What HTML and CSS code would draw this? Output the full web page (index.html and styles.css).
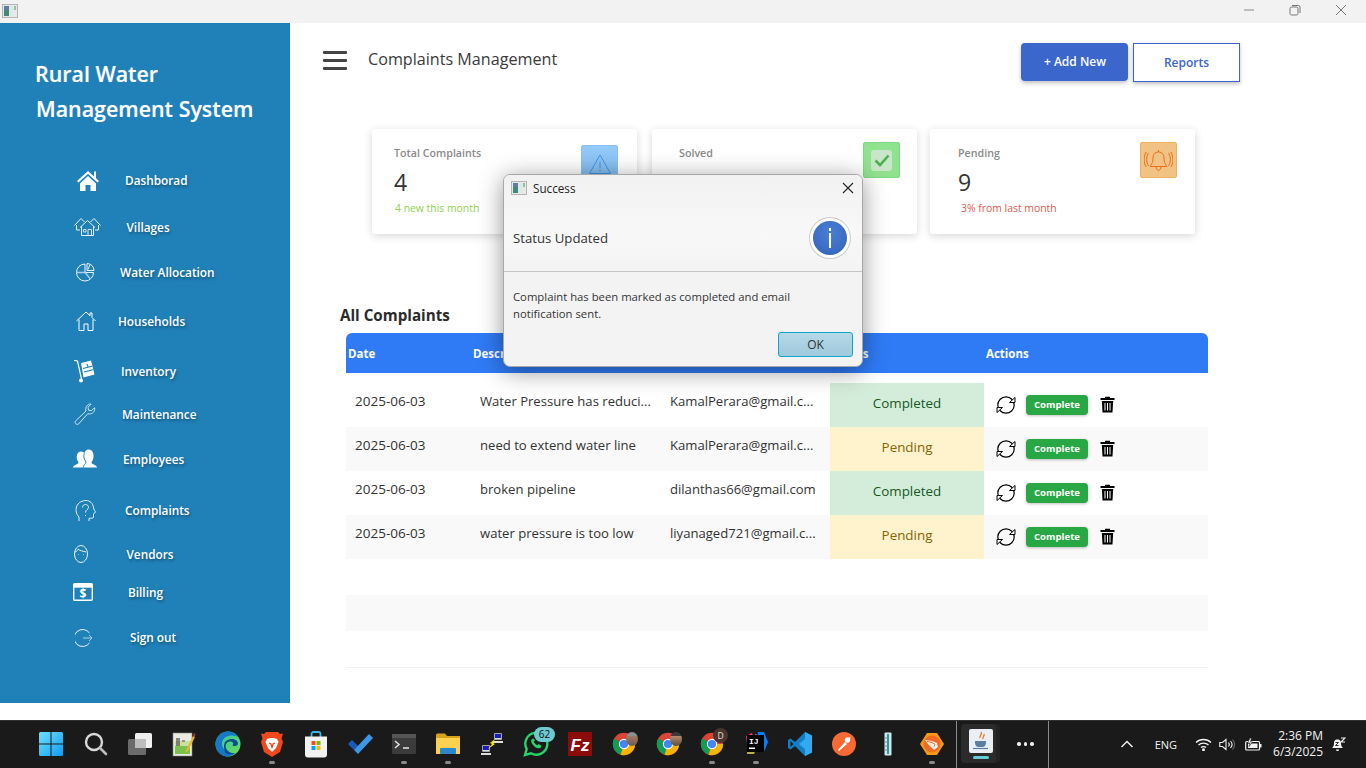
FILE: index.html
```html
<!DOCTYPE html>
<html lang="en">
<head>
<meta charset="utf-8">
<title>Complaints Management</title>
<link rel="stylesheet" href="styles.css">
</head>
<body>
<svg class="defs" width="0" height="0">
  <defs>
    <symbol id="appicon" viewBox="0 0 16 14">
      <rect x=".5" y=".5" width="15" height="13" fill="#e8e8e8" stroke="#b5b5b5"/>
      <rect x="2" y="2" width="5" height="10" fill="#3f8a7a"/>
      <rect x="2" y="2" width="5" height="4" fill="#5b7fa0"/>
      <rect x="8" y="2" width="3" height="10" fill="#dfe8e4"/>
      <rect x="12" y="2" width="2" height="4" fill="#8fc0a8"/>
    </symbol>
    <symbol id="refresh" viewBox="0 0 20 20">
      <circle cx="10" cy="10" r="8.200" fill="none" stroke="#000" stroke-width="1.200"/>
      <path d="M13.500 7.500h5.500V2.500zM6.500 12.500H1v5z" fill="#fff" stroke="#000" stroke-width="1"/>
    </symbol>
    <symbol id="trash" viewBox="0 0 15 17">
      <path d="M5 2V.7h5V2h4.500v2H.5V2z" fill="#000"/>
      <path d="M1.800 5h11.400l-.7 11.500H2.500z" fill="#000"/>
      <path d="M5 7v7.500M7.500 7v7.500M10 7v7.500" stroke="#fff" stroke-width="1"/>
    </symbol>
    <symbol id="chrome" viewBox="0 0 28 28">
      <circle cx="14" cy="14" r="13" fill="#db4437"/>
      <path d="M14 14 2.700 7.500A13 13 0 0 0 10 26.400z" fill="#0f9d58"/>
      <path d="M14 14h13A13 13 0 0 1 10 26.400z" fill="#f4b400"/>
      <circle cx="14" cy="14" r="6" fill="#fff"/>
      <circle cx="14" cy="14" r="4.800" fill="#4285f4"/>
    </symbol>
  </defs>
</svg>

<div class="titlebar">
  <svg class="title-icon"><use href="#appicon"/></svg>
  <div class="window-controls">
    <svg class="win-min" width="12" height="12" viewBox="0 0 12 12"><path d="M1 6h10" stroke="#888" stroke-width="1"/></svg>
    <svg class="win-max" width="12" height="12" viewBox="0 0 12 12"><rect x="1" y="3" width="8" height="8" rx="1.500" fill="none" stroke="#777"/><path d="M3 1.500h6.500a1.500 1.500 0 0 1 1.500 1.500v6" fill="none" stroke="#777"/></svg>
    <svg class="win-close" width="12" height="12" viewBox="0 0 12 12"><path d="M1 1l10 10M11 1L1 11" stroke="#777" stroke-width="1"/></svg>
  </div>
</div>

<div class="app">
  <aside class="sidebar">
    <h1 class="brand"><span class="brand-a">Rural Water</span><span class="brand-b">Management System</span></h1>
    <nav class="nav">
      <a class="nav-item n-dash">
        <svg class="ni" width="22" height="21" viewBox="0 0 22 21"><path d="M11 1 0 11l1.500 1.500L11 4l9.500 8.500L22 11l-3-2.700V1.500h-2v5z" fill="#fff"/><path d="M3 13.500 11 6l8 7.500V21h-5.500v-6h-5v6H3z" fill="#fff"/></svg>
        <span class="nl">Dashborad</span>
      </a>
      <a class="nav-item n-vill">
        <svg class="ni" width="27" height="19" viewBox="0 0 27 19" fill="none" stroke="#e9f4fb" stroke-width="1"><path d="M.5 8.500 7 1.500l3.500 3.500M26.500 8.500 20 1.500l-3.500 3.500M2.500 8v5h3.500M24.500 8v5H21"/><path d="M6 10.500 13.500 3.500 21 10.500M7.500 9v9.500h12V9"/><path d="M14 18.500v-6h3.500v6M9.500 12.500h2.500v2.500H9.500z" stroke="#cfe6f3"/></svg>
        <span class="nl">Villages</span>
      </a>
      <a class="nav-item n-water">
        <svg class="ni" width="20" height="20" viewBox="0 0 20 20" fill="none" stroke="#e9f4fb" stroke-width="1"><path d="M10 2A8.500 8.500 0 1 0 18.500 10.500H10z"/><path d="M1.500 10.500H10l5 6" stroke="#a9d2ea" stroke-width="1.300"/><path d="M12 1.500a7 7 0 0 1 7 7h-7zM15 2.500l-2 5"/></svg>
        <span class="nl">Water Allocation</span>
      </a>
      <a class="nav-item n-house">
        <svg class="ni" width="20" height="20" viewBox="0 0 20 20" fill="none" stroke="#fff" stroke-width="1"><path d="M.5 10 10 1l4 3.700V2h2v4.500L19.500 10M3 8.500v11h5v-6.500h4v6.500h5v-11"/></svg>
        <span class="nl">Households</span>
      </a>
      <a class="nav-item n-inv">
        <svg class="ni" width="23" height="23" viewBox="0 0 23 23"><path d="M1 .5l3.500.5L8.500 19" fill="none" stroke="#fff" stroke-width="1.200"/><circle cx="8" cy="20.500" r="2" fill="#fff"/><path d="M8 3l10-2.500 3.500 14-11 3z" fill="#fff"/><path d="M10 8.500l9-2.300M11 12l9-2.300M14 4l1 3" stroke="#2081b9" stroke-width="1.100"/></svg>
        <span class="nl">Inventory</span>
      </a>
      <a class="nav-item n-main">
        <svg class="ni" width="23" height="23" viewBox="0 0 23 23"><path d="M1.500 18 12 8c-1-3 .5-6 3.500-7l1.500.2-3 3 .5 3 3 .5 3-3 .3 1.500c-.5 3.500-3.500 5.500-7 4.500L4.500 21c-1.500 1.500-4.500-1-3-3z" fill="none" stroke="#cfe6f3" stroke-width="1"/></svg>
        <span class="nl">Maintenance</span>
      </a>
      <a class="nav-item n-emp">
        <svg class="ni" width="24" height="19" viewBox="0 0 24 19"><path d="M0 18.500c0-2 3.500-3 5-4 .8-.8.500-1.500-.500-3C3 9 3.500 2.500 8 2.500c1.700 0 2.700.8 3.300 1.800C12 2 13.500.5 15.500.5 21 .5 21.500 8 19.500 11.500c-1 1.500-1.300 2.200-.5 3 1.500 1 5 2 5 4z" fill="#fff"/><path d="M11.300 4.300c-1 3-.3 5.500 1 7.500 1 1.500.8 2.500-.500 3.500-.7.600-1.500 2-1.500 3.200" fill="none" stroke="#2081b9" stroke-width="1"/></svg>
        <span class="nl">Employees</span>
      </a>
      <a class="nav-item n-comp">
        <svg class="ni" width="21" height="22" viewBox="0 0 21 22" fill="none" stroke="#e9f4fb" stroke-width="1"><path d="M4 21v-4C1 14 .5 10 1.500 7 3 2 8 .5 11 .5c4 0 7 3 7.500 7 0 2 2 4 2 4.500l-2 2v3.500c0 1-3 .5-4.500 1v2.500"/><path d="M7.500 7.500c0-4 6-4 6 0 0 2-3 2-3 5M10.500 15v1"/></svg>
        <span class="nl">Complaints</span>
      </a>
      <a class="nav-item n-vend">
        <svg class="ni" width="14" height="18" viewBox="0 0 14 18" fill="none" stroke="#e9f4fb" stroke-width="1"><ellipse cx="7" cy="9" rx="6.500" ry="8.500"/><path d="M1 7c3-1 3-3 3-3 2 2 5 2 8 3"/><path d="M4.500 9.500v.5M9.500 9.500v.5"/></svg>
        <span class="nl">Vendors</span>
      </a>
      <a class="nav-item n-bill">
        <svg class="ni" width="20" height="18" viewBox="0 0 20 18"><rect x=".7" y=".7" width="18.600" height="16.600" rx="1" fill="none" stroke="#fff" stroke-width="1.400"/><rect x=".7" y=".7" width="18.600" height="4" fill="#fff"/><text class="bill-sign" x="10" y="15" text-anchor="middle">$</text></svg>
        <span class="nl">Billing</span>
      </a>
      <a class="nav-item n-sign">
        <svg class="ni" width="18" height="18" viewBox="0 0 18 18" fill="none" stroke="#e9f4fb" stroke-width="1"><path d="M14.500 4A8.500 8.500 0 1 0 14.500 14"/><path d="M8 9h9M14 6l3 3-3 3" stroke="#a9d2ea"/></svg>
        <span class="nl">Sign out</span>
      </a>
    </nav>
  </aside>

  <main class="content">
    <header class="topbar">
      <div class="hamburger"><i></i><i></i><i></i></div>
      <h2 class="page-title">Complaints Management</h2>
      <div class="top-actions">
        <button class="btn-add">+ Add New</button>
        <button class="btn-reports">Reports</button>
      </div>
    </header>

    <section class="cards">
      <article class="card card-total">
        <div class="card-body">
          <div class="card-label">Total Complaints</div>
          <div class="card-value">4</div>
          <div class="card-sub sub-green">4 new this month</div>
        </div>
        <div class="card-icon icon-blue">
          <svg width="24" height="22" viewBox="0 0 24 22" fill="none" stroke="#3a94e8" stroke-width="1"><path d="M12 2 1.500 20.500h21z"/><path d="M12 8.500v7M12 17v1.500"/></svg>
        </div>
      </article>
      <article class="card card-solved">
        <div class="card-body">
          <div class="card-label">Solved</div>
        </div>
        <div class="card-icon icon-green">
          <span class="check-box"><svg width="16" height="14" viewBox="0 0 16 14"><path d="M1.500 7.500 6 12 14.500 2.500" fill="none" stroke="#4caf50" stroke-width="2.600"/></svg></span>
        </div>
      </article>
      <article class="card card-pending">
        <div class="card-body">
          <div class="card-label">Pending</div>
          <div class="card-value">9</div>
          <div class="card-sub sub-red">3% from last month</div>
        </div>
        <div class="card-icon icon-orange">
          <svg width="29" height="23" viewBox="0 0 29 23" fill="none" stroke="#e8701a" stroke-width="1"><path d="M14.500 3c-4 0-5.500 3-5.500 6 0 5-2 7-3 8.500h17c-1-1.500-3-3.500-3-8.500 0-3-1.500-6-5.500-6zM14.500 3V1M12 17.500c0 5 5 5 5 0"/><path d="M4.500 4C2 8 2 13 4.500 17M2 3C-.5 8-.5 14 2 18M24.500 4c2.500 4 2.500 9 0 13M27 3c2.500 5 2.500 11 0 15"/></svg>
        </div>
      </article>
    </section>

    <h3 class="section-title">All Complaints</h3>

    <section class="table">
      <div class="thead">
        <div class="th c-date">Date</div>
        <div class="th c-desc">Description</div>
        <div class="th c-mail">Email</div>
        <div class="th c-stat">Status</div>
        <div class="th c-act">Actions</div>
      </div>
      <div class="row">
        <div class="td td-date">2025-06-03</div>
        <div class="td">Water Pressure has reduci...</div>
        <div class="td">KamalPerara@gmail.c...</div>
        <div class="status done">Completed</div>
        <div class="actions"><svg class="ic-refresh"><use href="#refresh"/></svg><button class="btn-complete">Complete</button><svg class="ic-trash"><use href="#trash"/></svg></div>
      </div>
      <div class="row alt">
        <div class="td td-date">2025-06-03</div>
        <div class="td">need to extend water line</div>
        <div class="td">KamalPerara@gmail.c...</div>
        <div class="status wait">Pending</div>
        <div class="actions"><svg class="ic-refresh"><use href="#refresh"/></svg><button class="btn-complete">Complete</button><svg class="ic-trash"><use href="#trash"/></svg></div>
      </div>
      <div class="row">
        <div class="td td-date">2025-06-03</div>
        <div class="td">broken pipeline</div>
        <div class="td">dilanthas66@gmail.com</div>
        <div class="status done">Completed</div>
        <div class="actions"><svg class="ic-refresh"><use href="#refresh"/></svg><button class="btn-complete">Complete</button><svg class="ic-trash"><use href="#trash"/></svg></div>
      </div>
      <div class="row alt">
        <div class="td td-date">2025-06-03</div>
        <div class="td">water pressure is too low</div>
        <div class="td">liyanaged721@gmail.c...</div>
        <div class="status wait">Pending</div>
        <div class="actions"><svg class="ic-refresh"><use href="#refresh"/></svg><button class="btn-complete">Complete</button><svg class="ic-trash"><use href="#trash"/></svg></div>
      </div>
      <div class="empty"></div>
      <div class="empty alt"></div>
      <div class="empty last"></div>
    </section>
  </main>
</div>

<footer class="taskbar">
  <div class="tb-icons">
    <div class="tb tb-start"><svg width="24" height="24" viewBox="0 0 24 24"><defs><linearGradient id="win" x1="0" y1="0" x2="1" y2="1"><stop offset="0" stop-color="#6fe0fb"/><stop offset="1" stop-color="#0f9cf5"/></linearGradient></defs><path d="M0 1.500 A1.500 1.500 0 0 1 1.500 0H11.500V11.500H0zM12.500 0H22.500A1.500 1.500 0 0 1 24 1.500V11.500H12.500zM0 12.500H11.500V24H1.500A1.500 1.500 0 0 1 0 22.500zM12.500 12.500H24V22.500A1.500 1.500 0 0 1 22.500 24H12.500z" fill="url(#win)"/></svg></div>
    <div class="tb"><svg width="24" height="24" viewBox="0 0 24 24" fill="none" stroke-linecap="round"><circle cx="10" cy="10" r="8" stroke="#d8d8d8" stroke-width="2.400"/><path d="M16 16l6 6" stroke="#bbb" stroke-width="2.600"/></svg></div>
    <div class="tb"><svg width="24" height="22" viewBox="0 0 24 22"><rect x="7" y="0" width="17" height="15" rx="1.500" fill="#f0f0f0"/><rect x="0" y="6" width="18" height="16" rx="1.500" fill="#6b6b6b"/><rect x="7" y="6" width="11" height="9" fill="#bdbdbd"/></svg></div>
    <div class="tb"><svg width="24" height="26" viewBox="0 0 24 26"><rect x="1" y="2" width="19" height="23" fill="#e9ece2" stroke="#888" stroke-width=".6"/><rect x="3" y="15" width="15" height="8" fill="#7cc24a"/><rect x="3" y="10" width="15" height="5" fill="#c8e0a0"/><path d="M5 7v8M7 7v8M10 10h3" stroke="#444" stroke-width="1.200"/><path d="M14 19 21 5l2 1-7 14-2.500 1.500z" fill="#f0b429"/><path d="M21 5l1-3 1.500.8-.5 3.200z" fill="#a33"/></svg></div>
    <div class="tb"><svg width="26" height="26" viewBox="0 0 26 26"><defs><linearGradient id="edgeA" x1="0" y1="0" x2="1" y2="1"><stop offset="0" stop-color="#2fc6a0"/><stop offset="1" stop-color="#6fdc5c"/></linearGradient></defs><circle cx="13" cy="13" r="12.500" fill="url(#edgeA)"/><path d="M.5 13C1 5 7 .5 13 .5c4 0 8 2 10 6C19 3 8 4 7 12c-.5 6 6 11 13 10-2 2-4.500 3.500-7.500 3.500C6 25.500 .5 20 .5 13z" fill="#1678c8"/><path d="M9 15c0-5 4-7 8-7 3 0 6 2 6 4.500 0 2-2 2.500-4 2.500-1 0-2-.5-1-1.500 1-2-1-3.500-3.500-3C12 11 10 13 11 17c1 3 5 6 9 5-3 2-7 1.500-9 .5-1.500-1-2-4.500-2-7.500z" fill="#0c4f91"/></svg></div>
    <div class="tb pin"><svg width="22" height="25" viewBox="0 0 22 25"><path d="M5 0h12l2 2 3-.5-1.500 5L22 10l-3 10-8 5-8-5L0 10l1.500-3.500L0 1.500 3 2z" fill="#f1491b"/><path d="M6 7l3-1h4l3 1 1.500 3-2.500 6-4 4-4-4L4.500 10z" fill="#fff"/><path d="M8 11l2 1 1 4 1-4 2-1" fill="none" stroke="#f1491b" stroke-width="1.300"/></svg></div>
    <div class="tb"><svg width="24" height="27" viewBox="0 0 24 27"><path d="M7.500 6V3a2 2 0 0 1 2-2h5a2 2 0 0 1 2 2v3" fill="none" stroke="#3ab6e8" stroke-width="1.800"/><path d="M1 5.500h22v18a3 3 0 0 1-3 3H4a3 3 0 0 1-3-3z" fill="#f2f2f2"/><rect x="7.500" y="10" width="4" height="4" fill="#f25022"/><rect x="12.500" y="10" width="4" height="4" fill="#7fba00"/><rect x="7.500" y="15" width="4" height="4" fill="#00a4ef"/><rect x="12.500" y="15" width="4" height="4" fill="#ffb900"/></svg></div>
    <div class="tb"><svg width="25" height="20" viewBox="0 0 25 20"><path d="M0 10l4-4 6 6-4 4z" fill="#195abd"/><path d="M6 16 21 0l4 4L10 20z" fill="#3d97e8"/></svg></div>
    <div class="tb pin"><svg width="24" height="20" viewBox="0 0 24 20"><rect width="24" height="20" rx="1.500" fill="#3b3b3b"/><rect width="24" height="4" fill="#555"/><path d="M3 7l4 3.500L3 14" fill="none" stroke="#ddd" stroke-width="1.600"/><path d="M11 14h6" stroke="#ddd" stroke-width="1.600"/></svg></div>
    <div class="tb pin"><svg width="24" height="22" viewBox="0 0 24 22"><path d="M0 2a1.500 1.500 0 0 1 1.500-1.500H9L11 3h13v3H0z" fill="#d9a21b"/><path d="M0 5h24v16H0z" fill="#fcd150"/><rect x="4" y="15" width="16" height="6" rx="1" fill="#2b87c9"/></svg></div>
    <div class="tb"><svg width="24" height="24" viewBox="0 0 24 24"><rect x="14" y="1" width="8" height="7" fill="#ddd" stroke="#222" stroke-width=".6"/><rect x="15" y="2" width="6" height="4" fill="#1b1bbf"/><path d="M13 9h10v2H13z" fill="#ddd"/><rect x="2" y="13" width="8" height="7" fill="#ddd" stroke="#222" stroke-width=".6"/><rect x="3" y="14" width="6" height="4" fill="#1b1bbf"/><path d="M1 21h10v2H1z" fill="#ddd"/><path d="M15 7l-5 4 2 1-4 5 7-5-2-1z" fill="#ffe017"/></svg></div>
    <div class="tb wa"><svg width="26" height="26" viewBox="0 0 26 26"><path d="M2 24l1.700-6A11 11 0 1 1 8 22.300z" fill="none" stroke="#25d366" stroke-width="2.400"/><path d="M9 8c-1.500 1-1 3.500 1 6s5 4 7 3c1-.5 1.500-2 1-2.500l-2.500-1.500-1 1.200c-1.500-.5-3-2-3.700-3.700L12 9.500 10.500 7.500z" fill="#25d366"/></svg><span class="badge-num">62</span></div>
    <div class="tb"><svg width="24" height="24" viewBox="0 0 24 24"><rect width="24" height="24" fill="#8c0b0b"/><text class="fz" x="12" y="18.500" text-anchor="middle">Fz</text></svg></div>
    <div class="tb chrome"><svg width="24" height="24"><use href="#chrome"/></svg><span class="avatar av1"></span></div>
    <div class="tb chrome"><svg width="24" height="24"><use href="#chrome"/></svg><span class="avatar av2"></span></div>
    <div class="tb chrome pin"><svg width="24" height="24"><use href="#chrome"/></svg><span class="avatar-d">D</span></div>
    <div class="tb pin"><svg width="24" height="24" viewBox="0 0 24 24"><path d="M2 4l6-3 4 10-8 8z" fill="#f5317f"/><path d="M14 0h6l4 10-4 10-8-8z" fill="#087cfa"/><path d="M4 8l8-6 4 6-6 14H3z" fill="#fcf84a" opacity=".7"/><rect x="3" y="3" width="17" height="17" fill="#000"/><text class="ij" x="5" y="11.500">IJ</text><rect x="5" y="15.500" width="6" height="1.500" fill="#fff"/></svg></div>
    <div class="tb"><svg width="24" height="24" viewBox="0 0 24 24"><path d="M17 0l7 3.500v17L17 24 7 14l-4.500 3.500L0 16V8l2.500-1.500L7 10z" fill="#0f80c8"/><path d="M17 0l7 3.500v17L17 24V17l-6-5 6-5z" fill="#35a8ee"/><path d="M2.500 9 5.500 12 2.500 15z" fill="#1c1c1c"/></svg></div>
    <div class="tb"><svg width="24" height="24" viewBox="0 0 24 24"><circle cx="12" cy="12" r="12" fill="#f76935"/><path d="M6 18l7-8 2 2-8 7zM13 9.500a3 3 0 0 1 4-4l1.500-.5-.5 1.500a3 3 0 0 1-4 4z" fill="#fff"/></svg></div>
    <div class="tb"><svg width="8" height="24" viewBox="0 0 8 24"><rect x=".5" y=".5" width="7" height="23" rx="1" fill="#cfe9ea"/><path d="M3 2h2v20H3z" fill="#2a9d9e"/><path d="M1 6h2M1 10h2M1 14h2M1 18h2" stroke="#555" stroke-width=".6"/></svg></div>
    <div class="tb pin"><svg width="24" height="24" viewBox="0 0 24 24"><path d="M7 1h10l7 11-7 11H7L0 12z" fill="#f59a16"/><circle cx="12" cy="12" r="8.500" fill="#ef6a24"/><path d="M5 8l7 1 5 2 1 4-4 3-3-3-3-3z" fill="#fff" opacity=".9"/><path d="M7 9.500l5 1 3 2-1 2" fill="none" stroke="#ef6a24" stroke-width="1"/></svg></div>
    <div class="tb-active">
      <div class="tb-active-card">
        <svg width="24" height="24" viewBox="0 0 24 24"><rect width="24" height="24" rx="2" fill="#e9eff5"/><path d="M12 3c2 2-2 4-1 6M15 5c1 2-2 3-1 5" fill="none" stroke="#e8701a" stroke-width="1.300"/><path d="M6 12h11v1c0 4-2 5-3.500 5h-4C8 18 6 17 6 13z" fill="#5a7fa0"/><path d="M4 19.500h15" stroke="#5a7fa0" stroke-width="1.200"/></svg>
        <i class="active-bar"></i>
      </div>
    </div>
    <div class="tb-more"><i></i><i></i><i></i></div>
  </div>

  <div class="tray">
    <svg class="t-chev" width="14" height="8" viewBox="0 0 14 8"><path d="M1.500 7 7 1.500 12.500 7" fill="none" stroke="#eee" stroke-width="1.500"/></svg>
    <span class="t-lang">ENG</span>
    <svg class="t-wifi" width="17" height="13" viewBox="0 0 17 13" fill="none" stroke="#f2f2f2" stroke-width="1.300"><path d="M1 4.500c4-4 11-4 15 0M3.500 7c2.500-2.500 7.500-2.500 10 0M6 9.500c1.200-1.200 3.800-1.200 5 0"/><circle cx="8.500" cy="11.800" r=".8" fill="#f2f2f2"/></svg>
    <svg class="t-vol" width="16" height="13" viewBox="0 0 16 13" fill="none" stroke="#f2f2f2" stroke-width="1.100"><path d="M.8 4.500h2.700l3.500-3v10l-3.500-3H.8zM9.500 4.500c1 1.200 1 2.800 0 4M11.500 3c1.800 2 1.800 5 0 7"/><path d="M13.500 1.500c2.500 3 2.500 7 0 10" stroke="#666"/></svg>
    <svg class="t-bat" width="17" height="13" viewBox="0 0 17 13"><rect x=".7" y="3.500" width="13.800" height="8.500" rx="1" fill="none" stroke="#f2f2f2" stroke-width="1.200"/><rect x="3" y="5.500" width="9.500" height="4.500" fill="#f2f2f2"/><rect x="15" y="6" width="1.500" height="3.500" fill="#f2f2f2"/><path d="M5 0 2.500 5H5L4 8.500 7.500 4H5.500L6.500 0z" fill="#f2f2f2" stroke="#1a1a1a" stroke-width=".6"/></svg>
    <div class="t-clock"><span>2:36 PM</span><span>6/3/2025</span></div>
    <svg class="t-bell" width="15" height="15" viewBox="0 0 15 15"><path d="M6.500 2.500c-3 0-3.500 2-3.500 4 0 2.500-1 3.500-2 4.500h11c-1-1-2-2-2-4.500 0-2-.5-4-3.500-4z" fill="#f2f2f2"/><path d="M5 12.500c0 2 3 2 3 0" fill="#f2f2f2"/><path d="M10 1h4l-4 4h4" fill="none" stroke="#f2f2f2" stroke-width="1.100"/><path d="M4.500 5.500h3l-3 3h3" fill="none" stroke="#1a1a1a" stroke-width=".9"/></svg>
  </div>
</footer>

<div class="dialog" role="dialog">
  <div class="dlg-top">
    <div class="dlg-title">
      <svg class="dlg-appicon"><use href="#appicon"/></svg>
      <span class="dlg-title-text">Success</span>
      <svg class="dlg-x" width="12" height="12" viewBox="0 0 12 12"><path d="M1 1l10 10M11 1 1 11" stroke="#222" stroke-width="1.100"/></svg>
    </div>
    <div class="dlg-head">
      <span class="dlg-heading">Status Updated</span>
      <span class="dlg-info"><svg width="34" height="34" viewBox="0 0 34 34"><rect x="16" y="7" width="2" height="3" fill="#fff"/><rect x="16" y="12" width="2" height="15" fill="#fff"/></svg></span>
    </div>
  </div>
  <div class="dlg-body">
    <p class="dlg-msg">Complaint has been marked as completed and email notification sent.</p>
    <div class="dlg-foot"><button class="dlg-ok">OK</button></div>
  </div>
</div>
</body>
</html>
```

FILE: styles.css
```css
* { box-sizing: border-box; }
html, body { margin: 0; padding: 0; }
body {
  width: 1366px;
  height: 768px;
  overflow: hidden;
  display: flex;
  flex-direction: column;
  background: #fff;
  font-family: "Open Sans", "Noto Sans", sans-serif;
  color: #333;
  position: relative;
}
.defs { position: absolute; }
button { font-family: inherit; cursor: default; }

/* window chrome */
.titlebar {
  height: 23px;
  flex: none;
  background: #f2f2f2;
  display: flex;
  align-items: center;
  justify-content: space-between;
}
.title-icon { width: 16px; height: 14px; margin-left: 2px; margin-top: -1px; }
.window-controls { display: flex; align-items: center; padding-right: 19px; margin-top: -3px; }
.win-max { margin-left: 34px; }
.win-close { margin-left: 34px; }

.app { height: 697px; flex: none; display: flex; align-items: flex-start; }

/* sidebar */
.sidebar {
  width: 290px;
  height: 680px;
  flex: none;
  background: #2081b9;
  color: #fff;
  padding-top: 33px;
}
.brand {
  margin: 0;
  font-size: 21.400px;
  font-weight: 600;
  line-height: 35px;
  height: 113px;
  text-shadow: 0 0 1px rgba(255,255,255,.4);
}
.brand span { display: block; }
.brand-a { padding-left: 35px; }
.brand-b { padding-left: 36px; }
.nav { display: flex; flex-direction: column; }
.nav-item {
  display: flex;
  align-items: flex-start;
  height: var(--h);
  padding-left: var(--ix);
}
.ni { margin-top: var(--it); flex: none; }
.nl {
  margin-left: var(--lx);
  margin-top: -1px;
  font-size: 11.800px;
  font-weight: 600;
  line-height: 24px;
  white-space: nowrap;
  text-shadow: 1px 2px 3px rgba(0,0,0,.35);
}
.n-dash  { --h: 47px; --ix: 77px; --lx: 26px; --it: 1px; }
.n-vill  { --h: 45px; --ix: 74px; --lx: 25.500px; --it: 1px; }
.n-water { --h: 49px; --ix: 75px; --lx: 25px; --it: 1px; }
.n-house { --h: 50px; --ix: 76px; --lx: 22px; --it: 1px; }
.n-inv   { --h: 43px; --ix: 73px; --lx: 25px; --it: 0px; }
.n-main  { --h: 45px; --ix: 74px; --lx: 25px; --it: 0px; }
.n-emp   { --h: 51px; --ix: 73px; --lx: 26px; --it: 1px; }
.n-comp  { --h: 44px; --ix: 75px; --lx: 29px; --it: 1px; }
.n-vend  { --h: 38px; --ix: 74px; --lx: 38.500px; --it: 2px; }
.n-bill  { --h: 45px; --ix: 73px; --lx: 35px; --it: 2px; }
.n-sign  { --h: 45px; --ix: 75px; --lx: 37px; --it: 3px; }
.bill-sign { font: 700 12px "Open Sans", sans-serif; fill: #fff; }

/* main */
.content { flex: 1; min-width: 0; }
.topbar {
  height: 60px;
  display: flex;
  align-items: flex-start;
  padding-left: 33px;
}
.hamburger {
  width: 24px;
  height: 19px;
  margin-top: 28px;
  display: flex;
  flex-direction: column;
  justify-content: space-between;
}
.hamburger i { display: block; height: 3px; background: #444; border-radius: 1px; }
.page-title {
  margin: 23px 0 0 21px;
  font-size: 16.150px;
  font-weight: 400;
  line-height: 26px;
  color: #3a3a3a;
}
.top-actions { margin-left: auto; margin-right: 126px; margin-top: 20px; display: flex; gap: 5px; align-items: flex-start; }
.btn-add {
  width: 107px;
  height: 38px;
  border: 0;
  border-radius: 4px;
  background: #3b66cc;
  color: #fff;
  font-size: 12px;
  font-weight: 600;
  box-shadow: 0 2px 4px rgba(0,0,0,.25);
  padding: 0 0 2px 1px;
}
.btn-reports {
  width: 107px;
  height: 39px;
  border: 1px solid #3b66cc;
  background: #fff;
  color: #3b66cc;
  font-size: 12px;
  font-weight: 600;
  box-shadow: 0 2px 4px rgba(0,0,0,.25);
  padding: 0;
}

.cards { margin: 46px 0 0 82px; display: flex; align-items: flex-start; }
.card {
  width: 265px;
  height: 105px;
  background: #fff;
  border-radius: 3px;
  box-shadow: 0 2px 8px rgba(0,0,0,.16);
  display: flex;
  justify-content: space-between;
}
.card-solved { margin-left: 15px; }
.card-pending { margin-left: 13px; }
.card-body { padding: 16px 0 0 22px; }
.card-solved .card-body { padding-left: 27px; }
.card-pending .card-body { padding-left: 28px; }
.card-label { font-size: 10.700px; font-weight: 600; color: #8a8a8a; line-height: 16px; }
.card-value { font-size: 23px; line-height: 30px; margin-top: 6px; color: #333; }
.card-sub { font-size: 10.400px; line-height: 14px; margin-top: 4px; }
.sub-green { color: #8fd14f; padding-left: 1px; }
.sub-red { color: #e05a4e; padding-left: 3px; }
.card-icon {
  width: 37px;
  height: 36px;
  display: flex;
  align-items: center;
  justify-content: center;
  border-radius: 2px;
  margin: 13px 18px 0 0;
}
.icon-blue { background: linear-gradient(#95cbfb, #80b8ea); border: 1px solid #86c0f5; height: 37px; margin: 16px 19px 0 0; }
.icon-green { background: #8fe38f; border: 1px solid #7fd97f; margin-right: 17px; }
.icon-orange { background: #f2c284; border: 1px solid #edb060; }
.check-box { width: 21px; height: 21px; background: #c8e6c9; border-radius: 3px; display: flex; align-items: center; justify-content: center; }

.section-title {
  margin: 71px 0 0 50px;
  font-size: 15.200px;
  font-weight: 700;
  line-height: 20px;
  color: #2b2b2b;
}

/* table */
.table { margin: 8px 0 0 56px; width: 862px; }
.thead, .row {
  display: grid;
  grid-template-columns: 125px 190px 169px 154px 224px;
}
.thead {
  height: 40px;
  background: #2f7bf6;
  border-radius: 6px 6px 0 0;
  margin-bottom: 10px;
  align-items: center;
  color: #fff;
  font-size: 11.500px;
  font-weight: 700;
}
.th { padding-left: 2px; }
.row { height: 44px; font-size: 13.100px; color: #333; }
.row.alt, .empty.alt { background: #f9f9f9; }
.td { padding: 9px 0 0 9px; line-height: 18px; white-space: nowrap; overflow: hidden; }
.td-date { font-size: 13.500px; }
.status { display: flex; align-items: center; justify-content: center; font-size: 13.400px; padding-bottom: 4px; }
.status.done { background: #d4edda; color: #155724; }
.status.wait { background: #fff3cd; color: #856404; }
.actions { display: flex; align-items: flex-start; padding: 12px 0 0 12px; }
.ic-refresh { width: 20px; height: 20px; flex: none; }
.btn-complete {
  width: 62px;
  height: 20px;
  margin-left: 10px;
  border: 0;
  border-radius: 4px;
  background: #28a745;
  color: #fff;
  font-size: 9.600px;
  font-weight: 700;
  padding: 0 0 2px;
  box-shadow: 0 1px 3px rgba(0,0,0,.25);
}
.ic-trash { width: 15px; height: 17px; margin: 1px 0 0 12px; flex: none; }
.empty { height: 36px; }
.empty.last { height: 37px; border-bottom: 1px solid #f0f0f0; }

/* taskbar */
.taskbar {
  height: 48px;
  flex: none;
  background: #1a1a1a;
  border-top: 1px solid #303030;
  display: flex;
  justify-content: space-between;
  color: #f2f2f2;
}
.tb-icons { display: flex; padding-left: 30px; }
.tb {
  width: 44px;
  height: 47px;
  display: flex;
  align-items: center;
  justify-content: center;
  position: relative;
  padding-bottom: 1px;
}
.tb-start svg { margin-left: -2px; }
.tb.pin::after {
  content: "";
  position: absolute;
  left: 19px;
  bottom: 4px;
  width: 6px;
  height: 3px;
  border-radius: 2px;
  background: #8a8a8a;
}
.fz { font: italic 700 17px "Liberation Sans", sans-serif; fill: #fff; }
.ij { font: 700 8px "Liberation Mono", monospace; fill: #fff; }
.badge-num {
  position: absolute;
  left: 20px;
  top: 6px;
  width: 21px;
  height: 15px;
  border-radius: 8px;
  background: #6dcbd0;
  color: #111;
  font-size: 10px;
  line-height: 15px;
  text-align: center;
}
.avatar {
  position: absolute;
  left: 24px;
  top: 11px;
  width: 12px;
  height: 14px;
  border-radius: 50%;
}
.av1 { background: linear-gradient(#8a8f90 30%, #a07860 30%, #6b5a50); }
.av2 { background: linear-gradient(#3a3a3a 30%, #b58a70 30%, #5a4a40); }
.avatar-d {
  position: absolute;
  left: 23px;
  top: 7px;
  width: 15px;
  height: 15px;
  border-radius: 50%;
  background: #4a342c;
  color: #e8e0dc;
  font-size: 8.500px;
  line-height: 15px;
  text-align: center;
}
.tb-active {
  width: 47px;
  height: 47px;
  margin-left: 2px;
  padding-left: 4px;
  border-left: 1px solid #8a8a8a;
  padding-top: 3px;
}
.tb-active-card {
  width: 35px;
  height: 39px;
  border-radius: 4px;
  background: #2b2b2b;
  box-shadow: 4px 0 0 #232323;
  display: flex;
  flex-direction: column;
  padding: 5px 0 0 8px;
}
.active-bar { display: block; width: 16px; height: 3px; border-radius: 2px; background: #62cfd8; margin: 3px 0 0 4px; }
.tb-more {
  width: 46px;
  height: 47px;
  border-right: 1px solid #8a8a8a;
  display: flex;
  align-items: center;
  justify-content: center;
  gap: 3px;
  padding-bottom: 1px;
}
.tb-more i { width: 3.500px; height: 3.500px; border-radius: 50%; background: #eee; display: block; }

.tray { display: flex; align-items: center; padding-bottom: 1px; }
.t-lang { font-size: 11px; margin-left: 21px; }
.t-wifi { margin-left: 18px; }
.t-vol { margin-left: 7px; }
.t-bat { margin-left: 10px; }
.t-clock {
  margin-left: 11px;
  display: flex;
  flex-direction: column;
  align-items: flex-end;
  font-size: 12px;
  line-height: 16px;
}
.t-bell { margin: 0 20px 0 8px; }

/* dialog */
.dialog {
  position: absolute;
  left: 503px;
  top: 174px;
  width: 360px;
  height: 193px;
  background: #f3f3f3;
  border: 1px solid #a8a8a8;
  border-radius: 7px;
  box-shadow: 0 4px 24px rgba(0,0,0,.42);
  display: flex;
  flex-direction: column;
  overflow: hidden;
}
.dlg-top { height: 97px; background: linear-gradient(#f1f1f1, #f8f8f8 60%, #f3f3f3); border-bottom: 1px solid #c4c4c4; flex: none; }
.dlg-title { height: 26px; display: flex; align-items: center; padding: 0 8px 0 7px; }
.dlg-appicon { width: 16px; height: 14px; }
.dlg-title-text { font-size: 11.700px; color: #222; margin-left: 6px; }
.dlg-x { margin-left: auto; }
.dlg-head { display: flex; align-items: center; justify-content: space-between; height: 70px; padding: 4px 15px 0 9px; }
.dlg-heading { font-size: 13.200px; color: #333; }
.dlg-info {
  width: 34px;
  height: 34px;
  border-radius: 50%;
  background: radial-gradient(circle at 50% 35%, #4a7fd6, #3262b8);
  box-shadow: 0 0 0 3px #fff, 0 0 0 4px #c9c9c9;
}
.dlg-info svg { display: block; }
.dlg-body { flex: 1; display: flex; flex-direction: column; padding: 16px 9px 9px 9px; }
.dlg-msg { margin: 0; font-size: 11.300px; line-height: 17px; color: #333; width: 300px; }
.dlg-foot { margin-top: auto; display: flex; justify-content: flex-end; }
.dlg-ok {
  width: 75px;
  height: 25px;
  border: 1px solid #12a5cc;
  border-radius: 3px;
  background: linear-gradient(#b5d9e8, #9fc9dc);
  color: #333;
  font-size: 12px;
  padding: 0;
}
```
